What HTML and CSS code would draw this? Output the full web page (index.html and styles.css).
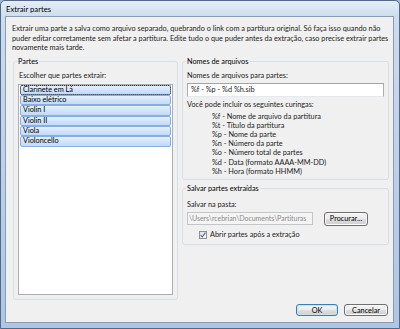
FILE: index.html
```html
<!DOCTYPE html>
<html lang="pt">
<head>
<meta charset="UTF-8">
<meta name="viewport" content="width=device-width, initial-scale=1.0">
<title>Extrair partes</title>
<link rel="stylesheet" href="styles.css">
</head>
<body>
<div class="window">
  <div class="titlebar">Extrair partes</div>
  <div class="client">
    <p class="intro">Extrair uma parte a salva como arquivo separado, quebrando o link com a partitura original. Só faça isso quando não<br>puder editar corretamente sem afetar a partitura. Edite tudo o que puder antes da extração, caso precise extrair partes<br>novamente mais tarde.</p>

    <div class="groups">
      <fieldset class="group parts">
        <legend>Partes</legend>
        <div class="label">Escolher que partes extrair:</div>
        <ul class="listbox">
          <li class="item focused">Clarinete em Lá</li>
          <li class="item">Baixo elétrico</li>
          <li class="item">Violin I</li>
          <li class="item">Violin II</li>
          <li class="item">Viola</li>
          <li class="item">Violoncello</li>
        </ul>
      </fieldset>

      <div class="side">
        <fieldset class="group names">
          <legend>Nomes de arquivos</legend>
          <div class="label">Nomes de arquivos para partes:</div>
          <div class="textbox">%f - %p - %d %h.sib</div>
          <div class="label hint">Você pode incluir os seguintes curingas:</div>
          <ul class="wildcards">
            <li>%f - Nome de arquivo da partitura</li>
            <li>%t - Título da partitura</li>
            <li>%p - Nome da parte</li>
            <li>%n - Número da parte</li>
            <li>%o - Número total de partes</li>
            <li>%d - Data (formato AAAA-MM-DD)</li>
            <li>%h - Hora (formato HHMM)</li>
          </ul>
        </fieldset>

        <fieldset class="group save">
          <legend>Salvar partes extraídas</legend>
          <div class="label">Salvar na pasta:</div>
          <div class="path-row">
            <div class="textbox disabled">\Users\rcebrian\Documents\Partituras</div>
            <button class="btn browse">Procurar...</button>
          </div>
          <div class="check">
            <span class="box">
              <svg width="6" height="6" viewBox="0 0 6 6"><polyline points="0.6,3.2 2.3,5 5.4,0.6" fill="none" stroke="#4b6396" stroke-width="1.1"/></svg>
            </span>
            Abrir partes após a extração
          </div>
        </fieldset>
      </div>
    </div>

    <div class="actions">
      <button class="btn default">OK</button>
      <button class="btn">Cancelar</button>
    </div>
  </div>
</div>
</body>
</html>
```

FILE: styles.css
```css
body {
  margin: 0;
  padding: 0;
  font-family: Lato, "Open Sans", sans-serif;
  font-size: 7.3px;
  color: #1b1b1b;
  background: #9fb6d2;
}
.window {
  width: 400px;
  height: 329px;
  box-sizing: border-box;
  display: flex;
  flex-direction: column;
  background: linear-gradient(180deg, #e4edf7 0, #cddcee 16px, #b9cee7 60%, #aec6e3 100%);
  border: 1px solid #53698a;
  border-radius: 5px 5px 0 0;
}
.titlebar {
  height: 15px;
  line-height: 17px;
  padding-left: 5px;
  font-size: 7.7px;
  color: #000;
}
.client {
  flex: 1;
  margin: 0 5px 5px 4px;
  padding: 7px 4px 6px 7px;
  background: #f0f0f0;
  border: 1px solid #8a9cb4;
  display: flex;
  flex-direction: column;
}
.intro {
  margin: 0 -3px 4px -1px;
  line-height: 9.5px;
  white-space: nowrap;
}

.groups {
  display: flex;
  gap: 4px;
}
.group {
  margin: 0;
  min-width: 0;
  border: 1px solid #d5dfe5;
  border-radius: 3px;
  padding: 4px 4px 4px 4px;
}
.group legend {
  padding: 0 1px;
  margin-left: -1px;
  line-height: 10px;
  color: #000;
}
.label {
  line-height: 10px;
}
.parts {
  width: 165px;
  box-sizing: border-box;
}
.parts .label {
  margin-left: 1px;
}
.listbox {
  list-style: none;
  margin: 3px 0 0;
  padding: 0 1px;
  height: 211px;
  box-sizing: border-box;
  background: #fff;
  border: 1px solid #abadb3;
}
.item {
  height: 8.4px;
  line-height: 8.6px;
  padding-left: 2px;
  border: 1px solid #86aee0;
  border-radius: 2px;
  background: linear-gradient(180deg, #e6f0fd 0%, #cfe2fb 60%, #c2d9f8 100%);
  color: #000;
}
.item.focused {
  outline: 1px dotted #333;
  outline-offset: -1px;
}

.side {
  flex: 1;
  display: flex;
  flex-direction: column;
  gap: 4px;
}
.names {
  padding-bottom: 3px;
}
.textbox {
  margin-top: 2px;
  height: 14px;
  line-height: 12px;
  box-sizing: border-box;
  padding-left: 3px;
  background: #fff;
  border: 1px solid #abadb3;
  border-top-color: #a0a4ab;
  border-bottom-color: #e3e9ef;
  white-space: nowrap;
  overflow: hidden;
}
.hint {
  margin-top: 3px;
}
.wildcards {
  list-style: none;
  margin: 2px 0 0 25px;
  padding: 0;
  line-height: 9.2px;
}

.save {
  padding-top: 6px;
}
.path-row {
  display: flex;
  align-items: center;
  gap: 11px;
  margin-top: 2px;
}
.textbox.disabled {
  margin-top: 0;
  width: 126px;
  height: 13px;
  line-height: 11px;
  padding-left: 1px;
  font-size: 7px;
  letter-spacing: -0.05px;
  color: #8a8a8a;
  background: #f4f4f4;
  border-color: #c2c5ca;
}
.btn {
  font-family: inherit;
  font-size: 7.3px;
  color: #000;
  padding: 0;
  height: 14px;
  border: 1px solid #707070;
  border-radius: 3px;
  background: linear-gradient(180deg, #f4f4f4 0%, #ececec 48%, #dedede 52%, #d0d0d0 100%);
  box-shadow: inset 0 0 0 1px #fbfbfb;
}
.browse {
  width: 44px;
}
.check {
  display: flex;
  align-items: center;
  gap: 3px;
  margin: 4px 0 0 12px;
  line-height: 10px;
}
.box {
  width: 8px;
  height: 8px;
  box-sizing: border-box;
  border: 1px solid #8e8f8f;
  background: linear-gradient(135deg, #dedede, #fbfbfb);
  display: flex;
  align-items: center;
  justify-content: center;
}

.actions {
  margin-top: auto;
  display: flex;
  justify-content: flex-end;
  gap: 6px;
  padding-right: 1px;
}
.actions .btn {
  width: 44px;
  height: 12px;
}
.actions .default {
  width: 42px;
  border-color: #3c7fb1;
  box-shadow: inset 0 0 0 1px #c0e3f6;
}
```
